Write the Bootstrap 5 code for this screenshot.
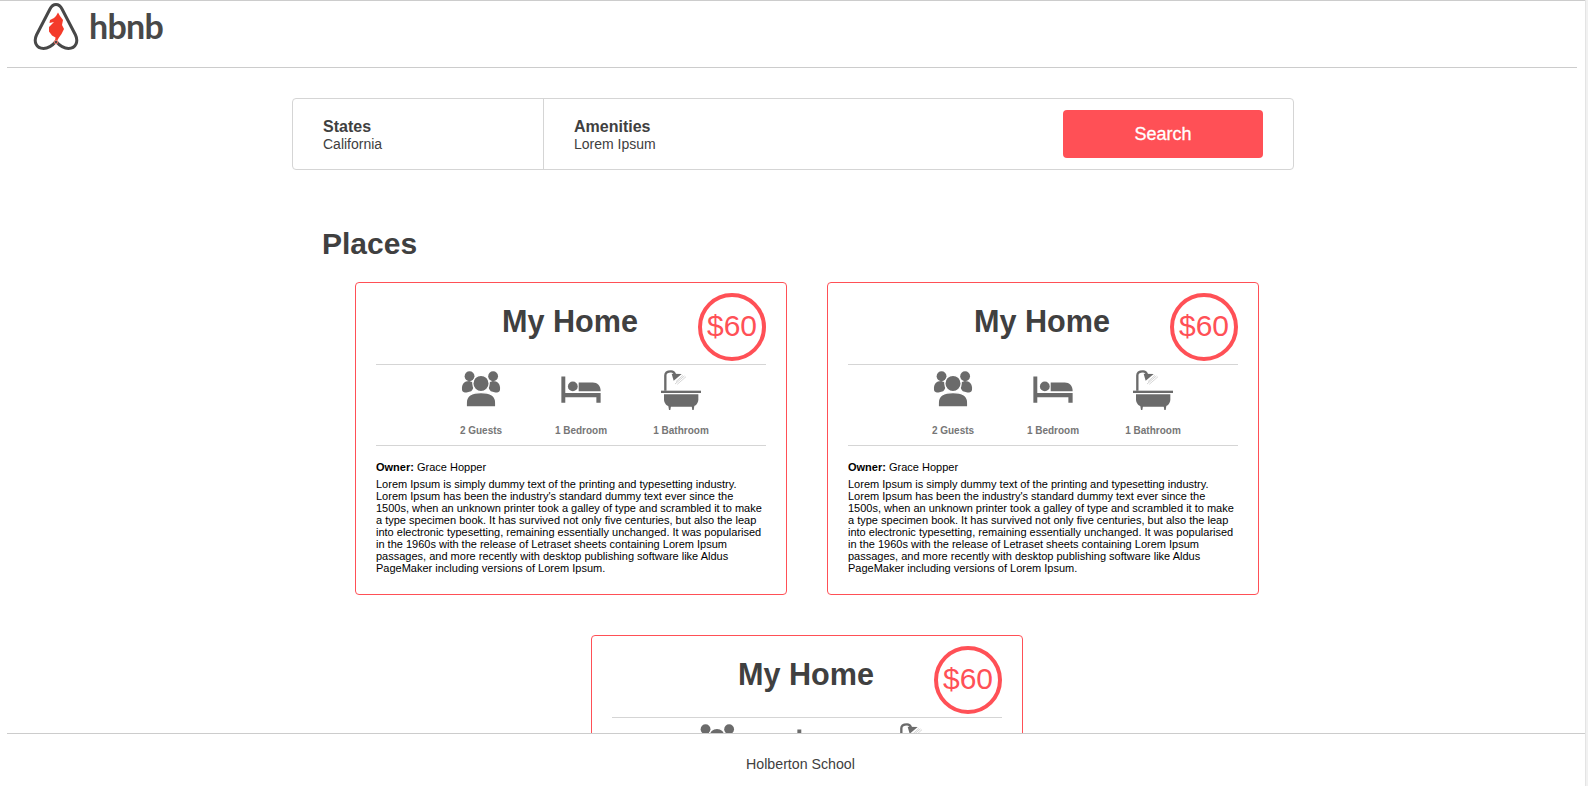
<!DOCTYPE html>
<html lang="en">
<head>
  <meta charset="UTF-8" />
  <meta name="viewport" content="width=device-width, initial-scale=1" />
  <title>HBnB</title>
  <link href="https://cdn.jsdelivr.net/npm/bootstrap@5.3.0/dist/css/bootstrap.min.css" rel="stylesheet">
  <style>
    html { scrollbar-width: none; }
    html::-webkit-scrollbar { display: none; }
    body { font-family: "Liberation Sans", Arial, sans-serif; color: #404040; background: #fff; border-top: 1px solid #ccc; padding: 0 3px 80px 0; }
    .site-head { height: 67px; margin: 0 8px 0 7px; border-bottom: 1px solid #ccc; padding-left: 26px; }
    .logo-mark { width: 46px; height: 49px; margin-top: 1px; }
    .logo-word { font-family: Lato, sans-serif; font-size: 34px; font-weight: 700; line-height: 1; margin: 8px 0 0 10px; letter-spacing: -.7px; color: #484848; }
    .filter-box { width: 1002px; height: 72px; margin: 30px 0 0 292px; border: 1px solid #d5d5d5; border-radius: 4px; }
    .filter-col { padding: 2px 0 0 30px; }
    .filter-col h3 { font-size: 16px; font-weight: 700; line-height: 18px; margin: 0; }
    .filter-col h4 { font-size: 14px; font-weight: 400; line-height: 16px; margin: 0; }
    .filter-states { width: 251px; border-right: 1px solid #d5d5d5; }
    .search-btn { width: 200px; height: 48px; margin-right: 30px; background: #ff5056; color: #fff; font-size: 18px; border: 0; border-radius: 4px; -webkit-text-stroke: .3px #fff; }
    .places-wrap { width: 1000px; margin-left: 292px; padding: 56px 0 0 30px; }
    .places-wrap h1 { font-size: 30px; font-weight: 700; line-height: 36px; margin: 0; }
    .place-item { width: 432px; height: 313px; margin: 20px; border: 1px solid #ff5056; border-radius: 4px; padding: 0 20px; }
    .place-title { height: 82px; padding: 0 2px 5px 0; border-bottom: 1px solid #d5d5d5; font-size: 30.6px; font-weight: 700; margin: 0; }
    .price-ring { top: 10px; right: 20px; width: 68px; height: 68px; padding-bottom: 4px; border: 4px solid #ff5056; border-radius: 50%; color: #ff5056; font-size: 30px; }
    .place-info { height: 81px; border-bottom: 1px solid #d5d5d5; padding-left: 20px; }
    .info-cell { width: 100px; padding-top: 6px; }
    .info-cell svg { display: block; margin: 0 auto; width: 40px; height: 36px; }
    .info-cell svg.bath-glyph { height: 40px; margin: -1px auto -3px; }
    .info-cell p { margin: 18px 0 0; font-size: 10px; font-weight: 700; line-height: 12px; color: #767676; }
    .place-owner { font-size: 11px; line-height: 13px; margin: 15px 0 4px; color: #000; }
    .place-desc { font-size: 11px; line-height: 12px; margin: 0; color: #000; }
    .site-foot { left: 7px; right: -6px; bottom: 0; height: 53px; background: #fff; border-top: 1px solid #ccc; font-size: 14.2px; line-height: 60px; }
    .scroll-strip { top: 0; right: 0; width: 3px; height: 100%; background: #f1f1f1; border-left: 1px solid #e4e4e4; z-index: 5; }
  </style>
</head>
<body>

  <svg width="0" height="0" class="d-block position-fixed">
    <symbol id="icon-guests" viewBox="0 0 120 110">
      <circle cx="25" cy="16" r="15" fill="#6b6b6b"/>
      <circle cx="97" cy="16" r="15" fill="#6b6b6b"/>
      <path d="M2 58 C0 40 10 30 26 31 C40 32 40 52 30 62 L16 66 C8 66 3 64 2 58 Z" fill="#6b6b6b"/>
      <path d="M118 58 C120 40 110 30 94 31 C80 32 80 52 90 62 L104 66 C112 66 117 64 118 58 Z" fill="#6b6b6b"/>
      <path d="M17 110 C14 110 15 104 15 96 C15 76 32 66 60 66 C88 66 105 76 105 96 C105 104 106 110 103 110 Z" fill="#6b6b6b" stroke="#fff" stroke-width="4"/>
      <circle cx="60" cy="38" r="25" fill="#6b6b6b" stroke="#fff" stroke-width="4"/>
    </symbol>
    <symbol id="icon-bed" viewBox="0 0 120 110">
      <path d="M0 17 H12 V67 H120 V97 H107 V80 H12 V97 H0 Z" fill="#6b6b6b"/>
      <circle cx="35" cy="47" r="15" fill="#6b6b6b"/>
      <path d="M53 35 H96 C110 35 120 45 120 62 H53 Z" fill="#6b6b6b"/>
    </symbol>
    <symbol id="icon-bath" viewBox="0 0 120 120">
      <rect x="0" y="62" width="120" height="7" fill="#6b6b6b"/>
      <path d="M9 73 H112 V88 C112 102 102 110 92 110 H29 C19 110 9 102 9 88 Z" fill="#6b6b6b"/>
      <path d="M22 108 H30 L28 120 H24 Z M92 108 H100 L98 120 H94 Z" fill="#6b6b6b"/>
      <path d="M13 62 V16 C13 7 20 4 30 4 C37 4 40 7 42 14" fill="none" stroke="#6b6b6b" stroke-width="7"/>
      <path d="M32 11 L62 12 L38 32 Z" fill="#6b6b6b"/>
      <path d="M46 34 L66 16 M42 42 L70 18 M50 42 L75 20" stroke="#999" stroke-width="2.500" stroke-dasharray="2 2" fill="none"/>
    </symbol>
  </svg>

  <!-- Header -->
  <header class="site-head d-flex align-items-start">
    <svg class="logo-mark" viewBox="0 0 46 49">
      <path d="M23 2.500 C20 2.500 18.500 4 17 7 L3.500 33 C0.500 39.500 3 46.500 10.500 46.500 C15 46.500 19 44 23 39.500 C27 44 31 46.500 35.500 46.500 C43 46.500 45.500 39.500 42.500 33 L29 7 C27.500 4 26 2.500 23 2.500 Z" fill="none" stroke="#484848" stroke-width="3"/>
      <path d="M25 10.500 L27 14 L30 18 L29 23 L31 27 L28.500 32 L26 35.500 L24.500 38 L22 39 L22.500 35.500 L19 33.500 L16 29.500 L16 25 L19 22 L21 20 L16.500 21 L17 18 L21 16 L23 14 Z" fill="#f43b2a"/>
      <circle cx="23" cy="40" r="1.800" fill="none" stroke="#f47a6e"/>
    </svg>
    <span class="logo-word">hbnb</span>
  </header>

  <!-- Filters -->
  <section class="filter-box d-flex align-items-stretch">
    <div class="filter-col filter-states d-flex flex-column justify-content-center">
      <h3>States</h3>
      <h4>California</h4>
    </div>
    <div class="filter-col flex-grow-1 d-flex flex-column justify-content-center">
      <h3>Amenities</h3>
      <h4>Lorem Ipsum</h4>
    </div>
    <div class="d-flex align-items-center">
      <button type="button" class="search-btn">Search</button>
    </div>
  </section>

  <!-- Places -->
  <section class="places-wrap">
    <h1>Places</h1>
    <div class="d-flex flex-wrap justify-content-center">

      <article class="place-item position-relative">
        <h2 class="place-title d-flex align-items-center justify-content-center">My Home</h2>
        <div class="price-ring position-absolute d-flex align-items-center justify-content-center">$60</div>
        <div class="place-info d-flex justify-content-center text-center">
          <div class="info-cell"><svg><use href="#icon-guests"/></svg><p>2 Guests</p></div>
          <div class="info-cell"><svg><use href="#icon-bed"/></svg><p>1 Bedroom</p></div>
          <div class="info-cell"><svg class="bath-glyph"><use href="#icon-bath"/></svg><p>1 Bathroom</p></div>
        </div>
        <p class="place-owner"><strong>Owner:</strong> Grace Hopper</p>
        <p class="place-desc">Lorem Ipsum is simply dummy text of the printing and typesetting industry. Lorem Ipsum has been the industry's standard dummy text ever since the 1500s, when an unknown printer took a galley of type and scrambled it to make a type specimen book. It has survived not only five centuries, but also the leap into electronic typesetting, remaining essentially unchanged. It was popularised in the 1960s with the release of Letraset sheets containing Lorem Ipsum passages, and more recently with desktop publishing software like Aldus PageMaker including versions of Lorem Ipsum.</p>
      </article>

      <article class="place-item position-relative">
        <h2 class="place-title d-flex align-items-center justify-content-center">My Home</h2>
        <div class="price-ring position-absolute d-flex align-items-center justify-content-center">$60</div>
        <div class="place-info d-flex justify-content-center text-center">
          <div class="info-cell"><svg><use href="#icon-guests"/></svg><p>2 Guests</p></div>
          <div class="info-cell"><svg><use href="#icon-bed"/></svg><p>1 Bedroom</p></div>
          <div class="info-cell"><svg class="bath-glyph"><use href="#icon-bath"/></svg><p>1 Bathroom</p></div>
        </div>
        <p class="place-owner"><strong>Owner:</strong> Grace Hopper</p>
        <p class="place-desc">Lorem Ipsum is simply dummy text of the printing and typesetting industry. Lorem Ipsum has been the industry's standard dummy text ever since the 1500s, when an unknown printer took a galley of type and scrambled it to make a type specimen book. It has survived not only five centuries, but also the leap into electronic typesetting, remaining essentially unchanged. It was popularised in the 1960s with the release of Letraset sheets containing Lorem Ipsum passages, and more recently with desktop publishing software like Aldus PageMaker including versions of Lorem Ipsum.</p>
      </article>

      <article class="place-item position-relative">
        <h2 class="place-title d-flex align-items-center justify-content-center">My Home</h2>
        <div class="price-ring position-absolute d-flex align-items-center justify-content-center">$60</div>
        <div class="place-info d-flex justify-content-center text-center">
          <div class="info-cell"><svg><use href="#icon-guests"/></svg><p>2 Guests</p></div>
          <div class="info-cell"><svg><use href="#icon-bed"/></svg><p>1 Bedroom</p></div>
          <div class="info-cell"><svg class="bath-glyph"><use href="#icon-bath"/></svg><p>1 Bathroom</p></div>
        </div>
        <p class="place-owner"><strong>Owner:</strong> Grace Hopper</p>
        <p class="place-desc">Lorem Ipsum is simply dummy text of the printing and typesetting industry. Lorem Ipsum has been the industry's standard dummy text ever since the 1500s, when an unknown printer took a galley of type and scrambled it to make a type specimen book. It has survived not only five centuries, but also the leap into electronic typesetting, remaining essentially unchanged. It was popularised in the 1960s with the release of Letraset sheets containing Lorem Ipsum passages, and more recently with desktop publishing software like Aldus PageMaker including versions of Lorem Ipsum.</p>
      </article>

    </div>
  </section>

  <footer class="site-foot position-fixed text-center">Holberton School</footer>
  <div class="scroll-strip position-fixed"></div>

  <script src="https://cdn.jsdelivr.net/npm/bootstrap@5.3.0/dist/js/bootstrap.bundle.min.js"></script>
</body>
</html>
